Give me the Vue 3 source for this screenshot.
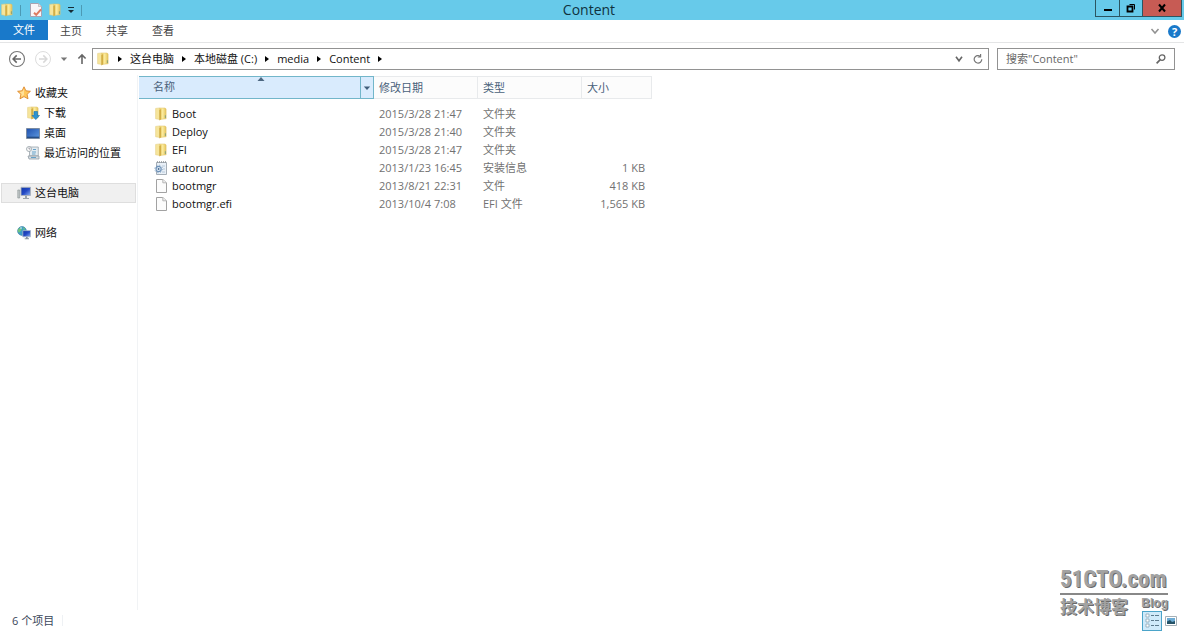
<script setup>
const crumbs = ['这台电脑', '本地磁盘 (C:)', 'media', 'Content']
const favorites = [
  { name: '下载', icon: 'download' },
  { name: '桌面', icon: 'desktop' },
  { name: '最近访问的位置', icon: 'recent' },
]
const files = [
  { name: 'Boot', date: '2015/3/28 21:47', type: '文件夹', size: '', icon: 'folder' },
  { name: 'Deploy', date: '2015/3/28 21:40', type: '文件夹', size: '', icon: 'folder' },
  { name: 'EFI', date: '2015/3/28 21:47', type: '文件夹', size: '', icon: 'folder' },
  { name: 'autorun', date: '2013/1/23 16:45', type: '安装信息', size: '1 KB', icon: 'setup' },
  { name: 'bootmgr', date: '2013/8/21 22:31', type: '文件', size: '418 KB', icon: 'file' },
  { name: 'bootmgr.efi', date: '2013/10/4 7:08', type: 'EFI 文件', size: '1,565 KB', icon: 'file' },
]
</script>

<template>
  <div class="window">
    <svg class="defs" aria-hidden="true">
      <defs>
        <linearGradient id="gold" x1="0" x2="1" y1="0" y2="0">
          <stop offset="0" stop-color="#f5dc7c" /><stop offset=".45" stop-color="#fbeb9e" /><stop offset="1" stop-color="#e4c35a" />
        </linearGradient>
        <linearGradient id="screen" x1="0" x2="1" y1="0" y2="1">
          <stop offset="0" stop-color="#1238a8" /><stop offset=".5" stop-color="#2348c4" /><stop offset="1" stop-color="#8fb4f0" />
        </linearGradient>
        <linearGradient id="desk" x1="0" x2="1" y1="0" y2="1">
          <stop offset="0" stop-color="#1f4fae" /><stop offset="1" stop-color="#5f9be0" />
        </linearGradient>
        <symbol id="folder" viewBox="0 0 14 14">
          <path d="M1.6 1.4 5.8.9v11.6l-4.2-.7z" fill="#f6e59c" stroke="#e3cb7a" stroke-width=".5" />
          <path d="M5.8 1h5.4l.9 1v9.8l-6 .6z" fill="url(#gold)" stroke="#dcbf62" stroke-width=".5" />
          <path d="M5.3 3 7.2 2v10.2l-1.9 1.2z" fill="#d3ae45" />
          <path d="M11.4 8.3v2.6" stroke="#8fa57a" stroke-width="1.1" />
        </symbol>
        <symbol id="file" viewBox="0 0 14 14">
          <path d="M2.5.5h6.3l3.7 3.3v9.7h-10z" fill="#fcfcfc" stroke="#a2a2a2" />
          <path d="M8.8.5v3.3h3.7" fill="#eee" stroke="#aaa" stroke-width=".8" />
        </symbol>
        <symbol id="setup" viewBox="0 0 14 14">
          <path d="M2.5 1.5h10v12h-10z" fill="#e9f0f7" stroke="#a5aeb7" />
          <path d="M3 1h9" stroke="#8f9499" stroke-width="1.6" stroke-dasharray="1 1" />
          <path d="M8 5h3M9 8h2M8 11h3" stroke="#b6c8da" />
          <circle cx="4.6" cy="8" r="2.6" fill="#dbe7f3" stroke="#6f92b8" stroke-width="1.2" />
          <circle cx="4.6" cy="8" r="3.8" fill="none" stroke="#7f9fc1" stroke-width=".9" stroke-dasharray="1.2 1.8" />
          <circle cx="4.6" cy="8" r=".9" fill="#486b92" />
        </symbol>
        <symbol id="download" viewBox="0 0 14 14">
          <use href="#folder" />
          <path d="M8 5.5h3.5v4h2L9.8 13.6 6 9.5h2z" fill="#2d93d1" stroke="#1672b1" stroke-width=".6" />
        </symbol>
        <symbol id="desktop" viewBox="0 0 14 14">
          <path d="M.5 2.5h13v10H.5z" fill="url(#desk)" stroke="#7a8ba2" />
          <path d="M1 11.3h12" stroke="#234b83" stroke-width="1.3" />
        </symbol>
        <symbol id="recent" viewBox="0 0 14 14">
          <path d="M3.5 1h8.8v8.8H3.5z" fill="#e4ebf0" stroke="#9aa4ab" stroke-width=".8" />
          <path d="M2 10h11v3H3z" fill="#d5dce1" stroke="#929ca4" stroke-width=".8" />
          <path d="M7 3.5h3M6 6h4M6 8h3.5M5 11.5h5" stroke="#65a1c8" />
          <circle cx="3" cy="3" r="2.5" fill="#fafafa" stroke="#959fa6" stroke-width=".8" />
          <path d="M3 1.5V3h1.3" fill="none" stroke="#667" stroke-width=".6" />
        </symbol>
        <symbol id="star" viewBox="0 0 14 14">
          <path d="m7 .8 1.9 4 4.5.5-3.3 3 .9 4.5-4-2.2-4 2.2.9-4.5-3.3-3 4.5-.5z" fill="#ffc75c" stroke="#dc8930" stroke-width=".9" />
          <path d="M7 3v6L4 11l.8-3-2.2-2 2.9-.4z" fill="#ffe09a" />
        </symbol>
        <symbol id="computer" viewBox="0 0 14 14">
          <path d="M.8 4h1.9v8H.8z" fill="#c2c8c9" stroke="#838d8e" stroke-width=".6" />
          <path d="M4 1.3h9.5v8.2H4z" fill="url(#screen)" stroke="#a9b1bb" stroke-width=".9" />
          <path d="M8 9.8h2V12h2v1H6v-1h2z" fill="#9ba3ab" />
        </symbol>
        <symbol id="network" viewBox="0 0 14 14">
          <circle cx="5" cy="5" r="4.4" fill="#3c9eca" stroke="#32779d" stroke-width=".6" />
          <path d="M2 2.3c2-.5 3 .2 2.6 1.7S2 5.3 2.2 7.2C.2 5.4.7 3.6 2 2.3zM5.5 1l2.8 1.7L7 4.3z" fill="#6fc47d" />
          <path d="M3 2h2" stroke="#d9f2f5" />
          <path d="M5.8 4.6h7.8v6.2H5.8z" fill="url(#screen)" stroke="#abb7c7" stroke-width=".8" />
          <path d="M9 11h1.7v1.3H12v.9H7.7v-.9H9z" fill="#8792a0" />
        </symbol>
      </defs>
    </svg>

    <header class="titlebar">
      <div class="quick">
        <svg class="icon"><use href="#folder" /></svg>
        <i class="divider"></i>
        <button aria-label="属性">
          <svg class="icon" viewBox="0 0 14 14"><path d="M1.5.5h8l3 3v10h-11z" fill="#f8f5f8" stroke="#a8a2b1" /><path d="M9.5.5v3h3" fill="#dedbe5" stroke="#aaa" stroke-width=".6" /><path d="m5 9.8 2.2 2L12 6.3" fill="none" stroke="#dd7a60" stroke-width="2" /></svg>
        </button>
        <button aria-label="新建文件夹"><svg class="icon"><use href="#folder" /></svg></button>
        <button aria-label="自定义快速访问工具栏"><svg class="tiny" viewBox="0 0 8 8"><path d="M1 1.5h6" stroke="#152b35" /><path d="M1 4h6L4 7z" fill="#152b35" /></svg></button>
        <i class="divider"></i>
      </div>
      <h1>Content</h1>
      <div class="controls">
        <button aria-label="最小化"><svg viewBox="0 0 12 12"><path d="M2 7h8v2H2z" /></svg></button>
        <button aria-label="还原"><svg viewBox="0 0 12 12"><path d="M4.5 2.5h5v5" fill="none" stroke="#000" /><path d="M2.5 4.5h5v5h-5z" fill="none" stroke="#000" stroke-width="1.8" /></svg></button>
        <button class="close" aria-label="关闭"><svg viewBox="0 0 12 12"><path d="m3 2.5 6 7M9 2.5l-6 7" stroke="#000" stroke-width="2" /></svg></button>
      </div>
    </header>

    <div class="ribbon">
      <button class="active">文件</button>
      <button>主页</button>
      <button>共享</button>
      <button>查看</button>
      <div class="help">
        <button aria-label="展开功能区"><svg class="arrow" viewBox="0 0 10 10"><path d="m1.5 3 3.5 4 3.5-4" fill="none" stroke="#919191" stroke-width="1.5" /></svg></button>
        <button class="question" aria-label="帮助">?</button>
      </div>
    </div>

    <div class="navbar">
      <div class="history">
        <button aria-label="后退"><svg class="round" viewBox="0 0 18 18"><circle cx="9" cy="9" r="7.5" fill="#fff" stroke="#777" stroke-width="1.1" /><path d="M13 9H5.2M8.7 5.4 5.1 9l3.6 3.6" fill="none" stroke="#666" stroke-width="1.5" /></svg></button>
        <button aria-label="前进"><svg class="round" viewBox="0 0 18 18"><circle cx="9" cy="9" r="7.5" fill="#fff" stroke="#ddd" /><path d="M5 9h7.8M9.3 5.4 12.9 9l-3.6 3.6" fill="none" stroke="#d8d8d8" stroke-width="1.5" /></svg></button>
        <button aria-label="最近浏览的位置"><svg class="tiny" viewBox="0 0 8 8"><path d="M.8 2.5h6.4L4 6z" fill="#777" /></svg></button>
        <button aria-label="上移"><svg class="up" viewBox="0 0 12 12"><path d="M6 11V2M2.4 5.5 6 1.9l3.6 3.6" fill="none" stroke="#666" stroke-width="1.6" /></svg></button>
      </div>
      <div class="address">
        <svg class="icon"><use href="#folder" /></svg>
        <svg class="chevron" viewBox="0 0 6 8"><path d="m1 1 4 3-4 3z" /></svg>
        <template v-for="crumb in crumbs" :key="crumb">
          <a href="#">{{ crumb }}</a>
          <svg class="chevron" viewBox="0 0 6 8"><path d="m1 1 4 3-4 3z" /></svg>
        </template>
        <div class="address-tools">
          <button aria-label="以前的位置"><svg class="arrow" viewBox="0 0 10 10"><path d="M2 2.7 5 6.8l3-4.1" fill="none" stroke="#666" stroke-width="1.6" /></svg></button>
          <button aria-label="刷新"><svg class="arrow" viewBox="0 0 10 10"><path d="M7.2 2.2a3.8 3.8 0 1 0 1.6 3M7.6 0v3H4.7" fill="none" stroke="#777" stroke-width="1.2" /></svg></button>
        </div>
      </div>
      <form class="search" @submit.prevent>
        <input type="search" aria-label="搜索" placeholder='搜索"Content"' />
        <button aria-label="搜索"><svg class="arrow" viewBox="0 0 10 10"><circle cx="6.1" cy="3.6" r="2.8" fill="none" stroke="#666" stroke-width="1.3" /><path d="M4 5.8.6 9.3" stroke="#666" stroke-width="1.7" /></svg></button>
      </form>
    </div>

    <div class="body">
      <nav class="sidebar">
        <a href="#"><svg class="icon"><use href="#star" /></svg>收藏夹</a>
        <a v-for="item in favorites" :key="item.name" class="child" href="#"><svg class="icon"><use :href="'#' + item.icon" /></svg>{{ item.name }}</a>
        <a class="group selected" href="#"><svg class="icon"><use href="#computer" /></svg>这台电脑</a>
        <a class="group" href="#"><svg class="icon"><use href="#network" /></svg>网络</a>
      </nav>
      <main class="content">
        <table>
          <colgroup><col class="c-name" /><col class="c-date" /><col class="c-type" /><col class="c-size" /></colgroup>
          <thead>
            <tr>
              <th class="sorted" aria-sort="ascending">
                <div class="sort-cell">
                  <span>名称</span>
                  <svg class="sort-mark" viewBox="0 0 8 4"><path d="M.5 4 4 0l3.5 4z" fill="#4c6781" /></svg>
                  <button aria-label="筛选名称"><svg class="tiny" viewBox="0 0 8 8"><path d="M.8 2.5h6.4L4 6z" fill="#405e7b" /></svg></button>
                </div>
              </th>
              <th>修改日期</th>
              <th>类型</th>
              <th>大小</th>
            </tr>
          </thead>
          <tbody>
            <tr v-for="file in files" :key="file.name">
              <td class="name"><div><svg class="icon"><use :href="'#' + file.icon" /></svg>{{ file.name }}</div></td>
              <td>{{ file.date }}</td>
              <td>{{ file.type }}</td>
              <td class="size">{{ file.size }}</td>
            </tr>
          </tbody>
        </table>
      </main>
    </div>

    <footer class="status">
      <span>6 个项目</span>
      <i class="status-line"></i>
      <div class="views">
        <button class="on" aria-label="详细信息"><svg viewBox="0 0 16 16"><path d="M2 1h3v3H2zM2 6h3v3H2zM2 11h3v3H2z" fill="#fff" stroke="#8aa6b5" stroke-width=".8" /><path d="M7 2.5h3m1 0h4m-8 5h3m1 0h4m-8 5h3m1 0h4" stroke="#5d7b8e" /></svg></button>
        <button aria-label="大图标"><svg viewBox="0 0 12 12"><path d="M.5 1.5h11v9H.5z" fill="#fff" stroke="#a5b0b7" /><path d="M2 3h8v6H2z" fill="#6dacd5" /><path d="M2 6.5 5 5l2 2 3-1v3H2z" fill="#245267" /></svg></button>
      </div>
    </footer>

    <div class="watermark">
      <div class="brand">51CTO.com</div>
      <div class="tagline"><span>技术博客</span><b>Blog</b></div>
    </div>
  </div>
</template>

<style>
body { margin: 0; background: #fff; }
</style>

<style scoped>
.window {
  position: relative;
  display: flex;
  flex-direction: column;
  min-height: 100vh;
  overflow: hidden;
  color: #111;
  background: #fff;
  font: 11px/18px "Open Sans", "Noto Sans CJK SC", sans-serif;
}
.window * { box-sizing: border-box; }
.defs { position: absolute; width: 0; height: 0; }
button { display: flex; align-items: center; justify-content: center; padding: 0; border: 0; background: none; color: inherit; font: inherit; }
a { color: inherit; text-decoration: none; }
svg { display: block; flex: none; }
.icon { width: 14px; height: 14px; }
.tiny { width: 8px; height: 8px; }
.arrow { width: 10px; height: 10px; }

.titlebar { display: grid; grid-template-columns: 1fr auto 1fr; height: 20px; background: #67caea; }
.quick { display: flex; align-items: center; gap: 5px; }
.divider { width: 1px; height: 11px; margin: 0 3px 0 1px; background: #4c9ab4; }
h1 { margin: 0; padding-right: 6px; font-size: 14px; line-height: 20px; font-weight: 400; color: #10323e; }
.controls { display: flex; justify-self: end; height: 17px; margin-right: 2px; border: 1px solid #2b5561; border-top: 0; }
.controls button { width: 23px; }
.controls button + button { border-left: 1px solid #2b5561; }
.controls .close { width: 39px; background: #c75b54; }
.controls svg { width: 12px; height: 12px; }

.ribbon { display: flex; height: 23px; border-bottom: 1px solid #e4e5e6; color: #444; }
.ribbon > button { width: 46px; }
.ribbon > .active { width: 48px; height: 20px; color: #fff; background: #1979ca; }
.help { display: flex; align-items: center; gap: 8px; margin-left: auto; padding-right: 3px; }
.question { width: 13px; height: 13px; border-radius: 50%; color: #fff; background: #1979ca; font-weight: 700; line-height: 13px; }

.navbar { display: flex; align-items: center; gap: 8px; height: 32px; padding: 0 9px 0 8px; }
.history { display: flex; align-items: center; gap: 8px; }
.round { width: 18px; height: 18px; }
.up { width: 12px; height: 12px; }
.address { display: flex; flex: 1; align-items: center; gap: 7px; height: 22px; margin-left: -4px; padding: 0 5px 0 3px; border: 1px solid #929292; line-height: 20px; }
.chevron { width: 6px; height: 8px; }
.address-tools { display: flex; gap: 9px; margin-left: auto; }
.search { display: flex; align-items: center; width: 178px; height: 22px; padding: 0 8px; border: 1px solid #929292; }
.search input { flex: 1; min-width: 0; padding: 0; border: 0; outline: 0; background: none; font: inherit; }
.search input::placeholder { color: #686868; opacity: 1; }

.body { display: flex; flex: 1; }
.sidebar { width: 138px; padding-top: 8px; border-right: 1px solid #f1f3f5; }
.sidebar a { display: flex; align-items: center; gap: 4px; height: 20px; margin: 0 1px; padding-left: 16px; white-space: nowrap; }
.sidebar .child { padding-left: 25px; }
.sidebar .group { margin-top: 20px; }
.sidebar .selected { padding-left: 15px; border: 1px solid #dedede; background: #f0f0f0; }
.content { flex: 1; padding: 1px 0 0 1px; }
table { border-collapse: separate; border-spacing: 0; table-layout: fixed; width: 513px; }
.c-name { width: 235px; }
.c-date, .c-type { width: 104px; }
.c-size { width: 70px; }
th { height: 23px; padding: 0 5px; border: 1px solid #e8eaec; border-left: 0; background: #fcfcfc; color: #49617a; font-weight: 400; line-height: 20px; text-align: left; }
th.sorted { padding: 0; border-color: #72b6ca; background: #d9ebfd; }
.sort-cell { display: grid; grid-template-columns: 118px 8px 1fr; align-items: stretch; height: 21px; }
.sort-cell span { padding-left: 14px; }
.sort-mark { width: 8px; height: 4px; }
.sort-cell button { justify-self: end; width: 13px; border-left: 1px solid #72b6ca; }
tbody::before { content: ""; display: block; height: 6px; }
td { height: 18px; padding: 0 5px; color: #717171; white-space: nowrap; }
.name { padding-left: 15px; color: #111; }
.name div { display: flex; align-items: center; gap: 4px; }
.size { padding-right: 7px; text-align: right; }

.status { display: flex; align-items: center; height: 21px; padding: 0 7px 0 12px; color: #3a475a; }
.status-line { width: 1px; height: 11px; margin-left: 8px; background: #eef1f4; }
.views { display: flex; align-items: center; gap: 3px; margin-left: auto; }
.views .on { width: 20px; height: 20px; border: 1px solid #4ba4c9; background: #cfeafa; }
.views svg { width: 12px; height: 12px; }
.views .on svg { width: 16px; height: 16px; }

.watermark { position: absolute; right: 16px; bottom: 14px; width: 108px; color: #a2a2a2; text-shadow: 1px 1px 0 #6a6a6a; }
.brand { border-bottom: 2px solid #888; font: 700 23px/27px "Liberation Sans Narrow", "Roboto Condensed", "DejaVu Sans Condensed", sans-serif; }
.tagline { display: flex; justify-content: space-between; font: 700 17px/22px "Noto Sans CJK SC", sans-serif; }
.tagline b { font: 700 12px/16px "Liberation Sans", sans-serif; }
</style>
